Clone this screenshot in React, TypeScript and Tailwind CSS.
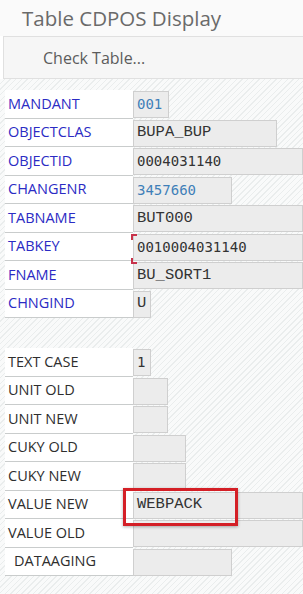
import React from 'react'

type Field = {
  label: string
  value?: string
  w: string
  mono?: 'courier' | 'sans'
  blue?: boolean
  indent?: boolean
  bracket?: boolean
  mark?: boolean
}

const KEY_FIELDS: Field[] = [
  { label: 'MANDANT', value: '001', w: 'w-[36px]', mono: 'sans', blue: true },
  { label: 'OBJECTCLAS', value: 'BUPA_BUP', w: 'w-[144px]', mono: 'courier' },
  { label: 'OBJECTID', value: '0004031140', w: 'flex-1', mono: 'sans' },
  { label: 'CHANGENR', value: '3457660', w: 'w-[99px]', mono: 'sans', blue: true },
  { label: 'TABNAME', value: 'BUT000', w: 'flex-1', mono: 'courier' },
  { label: 'TABKEY', value: '0010004031140', w: 'flex-1', mono: 'sans', bracket: true },
  { label: 'FNAME', value: 'BU_SORT1', w: 'flex-1', mono: 'courier' },
  { label: 'CHNGIND', value: 'U', w: 'w-[18px]', mono: 'courier' },
]

const DATA_FIELDS: Field[] = [
  { label: 'TEXT CASE', value: '1', w: 'w-[18px]', mono: 'sans' },
  { label: 'UNIT OLD', w: 'w-[35px]' },
  { label: 'UNIT NEW', w: 'w-[35px]' },
  { label: 'CUKY OLD', w: 'w-[53px]' },
  { label: 'CUKY NEW', w: 'w-[53px]' },
  { label: 'VALUE NEW', value: 'WEBPACK', w: 'flex-1', mono: 'courier', mark: true },
  { label: 'VALUE OLD', w: 'flex-1' },
  { label: 'DATAAGING', w: 'w-[99px]', indent: true },
]

function Row({ f, blueLabel }: { f: Field; blueLabel: boolean }) {
  return (
    <div className="relative flex h-[28.5px] items-stretch">
      <div
        className={`ml-[5px] flex w-[128px] items-center border-b border-[#c9cccc] bg-white text-[14.5px] ${
          f.indent ? 'pl-[9px]' : 'pl-[3px]'
        } ${blueLabel ? 'text-[#2b2bc4]' : 'text-[#2e2e2e]'}`}
      >
        {f.label}
      </div>
      <div className={`mt-[1px] flex h-[27px] items-center ${f.w}`}>
        <div
          className={`flex h-full w-full items-center border border-[#cfcfcf] bg-[#ececec] pl-[3px] ${
            f.blue ? 'text-[#3f7fb8]' : 'text-[#333]'
          } ${
            f.mono === 'courier'
              ? 'font-["Liberation_Mono",monospace] text-[15.5px] font-medium'
              : 'font-["DejaVu_Sans_Mono",monospace] text-[14px]'
          }`}
        >
          {f.value}
        </div>
      </div>
      {f.bracket && (
        <>
          <span className="absolute left-[131px] top-[1px] z-10 h-[6px] w-[6px] border-l-2 border-t-2 border-[#c8324a]" />
          <span className="absolute bottom-[-3px] left-[131px] z-10 h-[6px] w-[6px] border-b-2 border-l-2 border-[#c8324a]" />
        </>
      )}
      {f.mark && (
        <span className="pointer-events-none absolute left-[123px] top-[-3px] z-10 h-[38px] w-[115px] border-[3px] border-[#d41f26] shadow-[0_1px_3px_rgba(0,0,0,0.3)]" />
      )}
    </div>
  )
}

export default function App() {
  return (
    <div className="h-[594px] w-[303px] overflow-hidden bg-white font-['Open_Sans',sans-serif]">
      <div className="flex h-[36px] items-center bg-[#fafafa] pl-[22px] text-[20.5px] text-[#6a6a6a]">
        Table CDPOS Display
      </div>
      <div className="ml-[3px] flex h-[43px] items-center border-y border-l border-[#e0e0e0] bg-[#f6f6f6] pl-[39px] text-[16px] text-[#5c5c5c]">
        Check Table...
      </div>
      <div className="h-[515px] bg-[repeating-linear-gradient(135deg,#f9fafa_0px,#f9fafa_3px,#eaeded_3px,#eaeded_4px)] pt-[11px]">
        {KEY_FIELDS.map((f) => (
          <Row key={f.label} f={f} blueLabel />
        ))}
        <div className="h-[30px]" />
        {DATA_FIELDS.map((f) => (
          <Row key={f.label} f={f} blueLabel={false} />
        ))}
      </div>
    </div>
  )
}
